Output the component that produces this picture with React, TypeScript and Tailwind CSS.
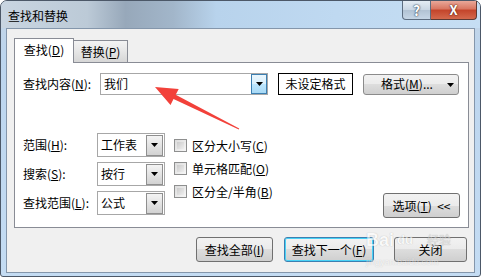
import { ReactNode } from 'react'

const Tri = () => (
  <svg width="7" height="4" viewBox="0 0 7 4"><path d="M0 0h7L3.5 4z" fill="#000" /></svg>
)

function Select({ value }: { value: string }) {
  return (
    <div className="w-[68px] h-[24px] border border-[#a7a7a7] bg-white flex items-center">
      <span className="flex-1 pl-[3px]">{value}</span>
      <div className="w-[17px] h-[21px] mr-px border border-[#8f8f8f] bg-[linear-gradient(#f4f4f4,#e3e3e3_50%,#d2d2d2)] flex items-center justify-center">
        <Tri />
      </div>
    </div>
  )
}

function Check({ children }: { children: ReactNode }) {
  return (
    <div className="h-[23px] flex items-center">
      <div className="w-[13px] h-[13px] border border-[#8e8f8f] bg-[linear-gradient(135deg,#dcdcdc,#f7f7f7)] p-[2px]">
        <div className="w-full h-full bg-[linear-gradient(135deg,#cbcbcb,#eeeeee)]" />
      </div>
      <span className="ml-[5px]">{children}</span>
    </div>
  )
}

function Btn({ w, children, def }: { w: string; children: ReactNode; def?: boolean }) {
  return (
    <div className={`${w} h-[25px] rounded-[3px] border flex items-center justify-center ${def ? 'border-[#3c7fb1] shadow-[inset_0_0_0_1px_#48d2f6]' : 'border-[#707070]'} bg-[linear-gradient(#f2f2f2,#ebebeb_50%,#dddddd_50%,#cfcfcf)]`}>
      {children}
    </div>
  )
}

export default function App() {
  return (
    <div className="w-[484px] h-[279px] bg-white relative overflow-hidden text-[12px] leading-[16px] text-black font-['Noto_Sans_CJK_SC','Microsoft_YaHei',sans-serif]">
      <div className="w-[481px] h-[277px] rounded-t-[7px] rounded-b-[3px] border border-[#4c5868] bg-[linear-gradient(#c6d5e4,#bcd5ee_20%,#c4dcf3)] flex flex-col">
        {/* title bar */}
        <div className="h-[27px] flex items-start rounded-t-[6px] bg-[linear-gradient(90deg,#c9d5e1_0%,#bccad7_18%,#97a8ba_26%,#a2b6ca_36%,#b8d3ec_45%,#bfd9f1_70%,#c6def3_100%)]">
          <span className="pl-[7px] pt-[7px] text-[12px]">查找和替换</span>
          <div className="ml-auto mr-[3px] flex">
            <div className="w-[29px] h-[19px] border border-[#5d6d80] border-t-0 rounded-bl-[4px] bg-[linear-gradient(#e4ecf4,#c9d6e3_50%,#b1c2d3_50%,#c6d6e6)] flex items-center justify-center text-white font-bold text-[14px] [text-shadow:0_0_2px_#2a3a4d,0_0_1px_#2a3a4d]">?</div>
            <div className="w-[46px] h-[19px] border border-[#5d3a34] border-t-0 border-l-0 rounded-br-[4px] bg-[linear-gradient(#e9a899,#d87560_45%,#c3442a_50%,#d4694d)] flex items-center justify-center text-white font-bold text-[13px] [text-shadow:0_0_2px_#5a1e12,0_0_1px_#5a1e12]">X</div>
          </div>
        </div>
        {/* client area */}
        <div className="mx-[5px] mb-[3px] flex-1 border border-[#8496ab] bg-[#f0f0f0] flex flex-col">
          <div className="ml-[7px] mt-[9px] h-[24px] flex items-end">
            <div className="w-[60px] h-[25px] -mb-px relative z-10 border border-b-0 border-[#898c95] bg-white flex items-center justify-center pb-[2px]">查找(<u>D</u>)</div>
            <div className="w-[54px] h-[22px] border border-l-0 border-b-0 border-[#898c95] bg-[linear-gradient(#f3f3f3,#e6e6e6_50%,#d6d6d6)] flex items-center justify-center">替换(<u>P</u>)</div>
          </div>
          <div className="ml-[7px] w-[455px] h-[166px] border border-[#898c95] bg-white pt-[10px] pl-[8px] pr-[8px] flex flex-col">
            <div className="h-[22px] flex items-center">
              <span className="w-[77px]">查找内容(<u>N</u>):</span>
              <div className="w-[168px] h-[22px] border border-[#a7a7a7] flex items-center">
                <span className="flex-1 pl-[3px]">我们</span>
                <div className="w-[16px] h-[20px] border border-[#3c7fb1] bg-[linear-gradient(#eaf6fd,#d9f0fc_50%,#bee6fd_50%,#a7d9f5)] flex items-center justify-center">
                  <Tri />
                </div>
              </div>
              <div className="ml-[10px] w-[75px] h-[22px] border border-black bg-white flex items-center justify-center">未设定格式</div>
              <div className="ml-[10px] w-[96px] h-[21px] rounded-[3px] border border-[#8b8b8b] bg-[linear-gradient(#f2f2f2,#ebebeb_50%,#dddddd_50%,#cfcfcf)] flex items-center relative">
                <span className="flex-1 text-center pr-[8px]">格式(<u>M</u>)...</span>
                <span className="absolute right-[4px] top-[8px]"><Tri /></span>
              </div>
            </div>
            <div className="mt-[38px] flex flex-1 pb-[8px]">
              <div className="flex flex-col gap-[5px]">
                <div className="flex items-center"><span className="w-[74px]">范围(<u>H</u>):</span><Select value="工作表" /></div>
                <div className="flex items-center"><span className="w-[74px]">搜索(<u>S</u>):</span><Select value="按行" /></div>
                <div className="flex items-center"><span className="w-[74px]">查找范围(<u>L</u>):</span><Select value="公式" /></div>
              </div>
              <div className="ml-[9px] mt-[1px] flex flex-col">
                <Check>区分大小写(<u>C</u>)</Check>
                <Check>单元格匹配(<u>O</u>)</Check>
                <Check>区分全/半角(<u>B</u>)</Check>
              </div>
              <div className="ml-auto self-end mb-px">
                <div className="w-[77px] h-[25px] rounded-[3px] border border-[#707070] bg-[linear-gradient(#f2f2f2,#ebebeb_50%,#dddddd_50%,#cfcfcf)] flex items-center justify-center">
                  选项(<u>T</u>)&nbsp;&nbsp;&lt;&lt;
                </div>
              </div>
            </div>
          </div>
          <div className="mt-[9px] pr-[7px] flex justify-end">
            <Btn w="w-[77px]">查找全部(<u>I</u>)</Btn>
            <div className="ml-[11px]"><Btn w="w-[90px]" def>查找下一个(<u>F</u>)</Btn></div>
            <div className="ml-[20px]"><Btn w="w-[73px]">关闭</Btn></div>
          </div>
        </div>
      </div>

      {/* red annotation arrow */}
      <svg className="absolute left-0 top-0 pointer-events-none" width="484" height="279">
        <polygon points="155,87 178.7,88.9 175.7,94.7 239.2,128.6 238.8,129.4 173.5,99.1 170.5,104.9" fill="#f2413a" />
      </svg>

      {/* faint watermark */}
      <div className="absolute left-[366px] top-[230px] pointer-events-none opacity-60 text-white [text-shadow:0_0_1px_#8a8a8a] font-['Liberation_Sans',sans-serif]">
        <div className="flex items-end leading-[20px]">
          <span className="text-[18px] font-bold">Bai</span>
          <span className="text-[13px] font-bold ml-[3px]">du</span>
          <span className="text-[12px] ml-[14px] text-[#d8d8d8] font-['Noto_Sans_CJK_SC',sans-serif]">经验</span>
        </div>
        <div className="text-[9px] leading-[11px] mt-[7px] opacity-70">jingyan.baidu.com</div>
      </div>
    </div>
  )
}
